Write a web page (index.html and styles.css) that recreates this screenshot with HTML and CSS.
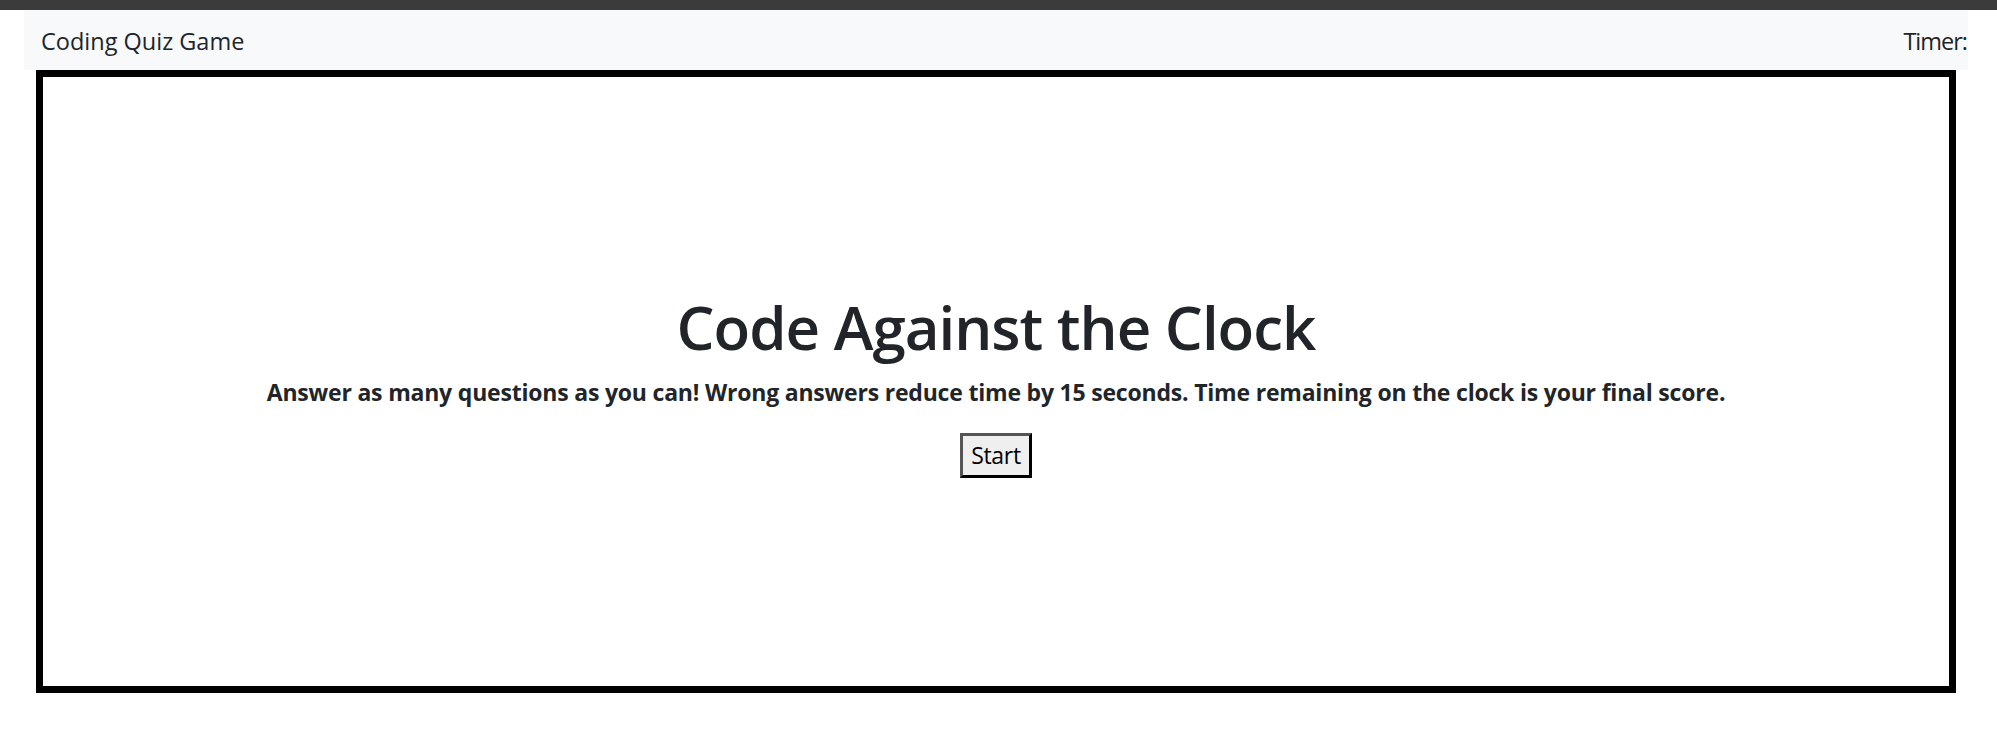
FILE: index.html
```html
<!DOCTYPE html>
<html lang="en">
<head>
<meta charset="utf-8">
<title>Coding Quiz Game</title>
<link rel="stylesheet" href="styles.css">
</head>
<body>
<div class="topbar"></div>
<nav class="navbar">
  <span class="brand">Coding Quiz Game</span>
  <span class="timer">Timer:</span>
</nav>
<main class="box">
  <h1 class="title">Code Against the Clock</h1>
  <p class="intro">Answer as many questions as you can! Wrong answers reduce time by 15 seconds. Time remaining on the clock is your final score.</p>
  <button class="start" type="button">Start</button>
</main>
</body>
</html>
```
FILE: styles.css
```css
html, body {
  margin: 0;
  padding: 0;
  background: #ffffff;
}
body {
  font-family: "Open Sans", "Noto Sans", sans-serif;
  color: #212529;
  width: 1997px;
  height: 735px;
  overflow: hidden;
}
.topbar {
  height: 10px;
  background: #3b3b3b;
}
.navbar {
  box-sizing: border-box;
  height: 60px;
  margin: 0 29px 0 24px;
  padding: 2px 1px 0 17px;
  background: #f8f9fa;
  display: flex;
  justify-content: space-between;
  align-items: center;
  font-size: 23.5px;
}
.timer {
  letter-spacing: -1px;
}
.box {
  box-sizing: border-box;
  height: 623px;
  margin: 0 41px 0 36px;
  border: 7px solid #000;
  display: flex;
  flex-direction: column;
  align-items: center;
  justify-content: center;
  padding-top: 8px;
}
.title {
  margin: 0;
  font-weight: 600;
  font-size: 60px;
  line-height: 66px;
  letter-spacing: -1px;
}
.intro {
  margin: 17px 0 26px;
  font-weight: 700;
  font-size: 23px;
  line-height: 30px;
  letter-spacing: -0.2px;
}
.start {
  box-sizing: border-box;
  width: 72px;
  height: 45px;
  padding: 0;
  font-family: inherit;
  font-size: 23px;
  color: #000;
  background: #efefef;
  border: 3px solid;
  border-color: #555 #000 #000 #555;
  letter-spacing: -0.3px;
}
```
